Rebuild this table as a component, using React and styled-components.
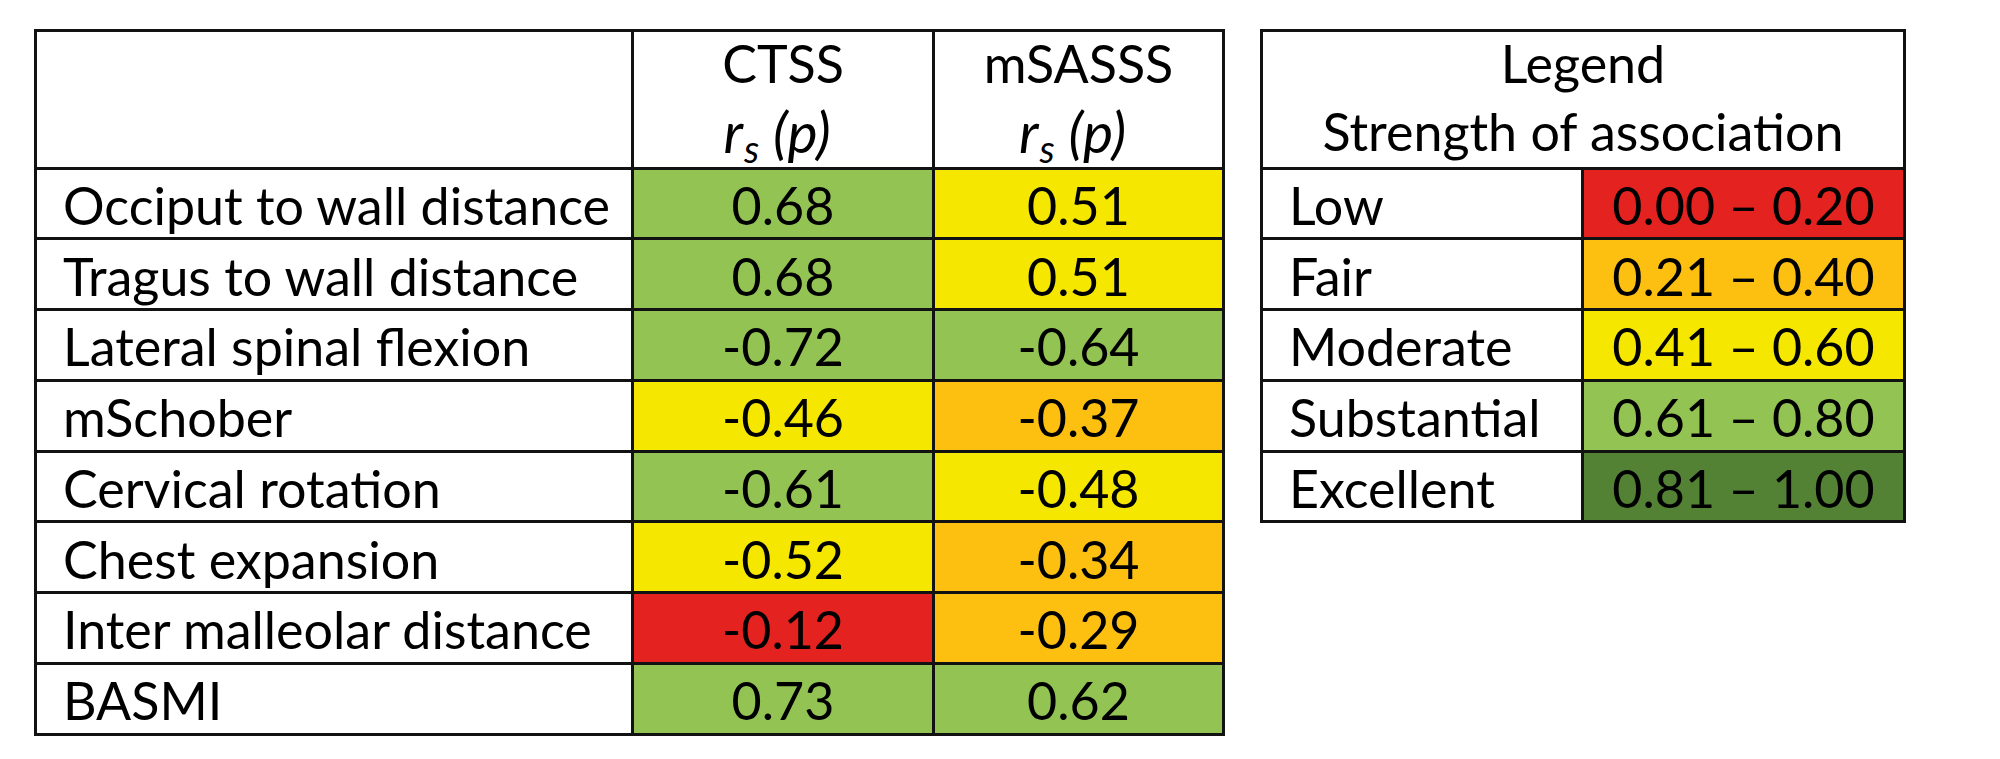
import React from 'react';
import styled, { createGlobalStyle } from 'styled-components';

const GlobalStyle = createGlobalStyle`
  html, body {
    margin: 0;
    padding: 0;
    background: #ffffff;
  }
  body {
    font-family: Lato, "Liberation Sans", sans-serif;
    color: #000000;
  }
`;

const COLORS = {
  red: '#e42320',
  orange: '#fdc010',
  yellow: '#f5e700',
  green: '#93c353',
  darkGreen: '#548235',
};

const Page = styled.div`
  display: flex;
  align-items: flex-start;
  gap: 35px;
  padding: 29px 0 0 34px;
`;

const Table = styled.table`
  border-collapse: collapse;
  table-layout: fixed;
  width: ${props => props.$width}px;
  font-size: 52px;
  line-height: 1;
  th,
  td {
    border: 3px solid #121212;
    padding: 0;
  }
`;

const HeadCell = styled.th`
  height: 137.5px;
  box-sizing: border-box;
  padding-top: 3px !important;
  font-weight: 400;
  text-align: center;
  vertical-align: top;
`;

const HeadLine = styled.div`
  height: 56px;
  line-height: 56px;
  white-space: nowrap;
  & + & {
    margin-top: 12px;
  }
`;

const Italic = styled.span`
  font-style: italic;
  font-size: 57px;
  margin-right: 12px;
`;

const Sub = styled.sub`
  font-size: 38px;
  vertical-align: -10px;
  line-height: 0;
  margin-left: 1px;
  margin-right: 14px;
`;

const Row = styled.tr`
  height: 70.75px;
`;

const LabelCell = styled.td`
  text-align: left;
  padding-left: 26px !important;
  padding-top: 3px !important;
  white-space: nowrap;
  background: #ffffff;
`;

const ValueCell = styled.td`
  text-align: center;
  padding-top: 3px !important;
  white-space: nowrap;
  background: ${props => COLORS[props.$tone]};
`;

const rows = [
  ['Occiput to wall distance', '0.68', 'green', '0.51', 'yellow'],
  ['Tragus to wall distance', '0.68', 'green', '0.51', 'yellow'],
  ['Lateral spinal flexion', '-0.72', 'green', '-0.64', 'green'],
  ['mSchober', '-0.46', 'yellow', '-0.37', 'orange'],
  ['Cervical rotation', '-0.61', 'green', '-0.48', 'yellow'],
  ['Chest expansion', '-0.52', 'yellow', '-0.34', 'orange'],
  ['Inter malleolar distance', '-0.12', 'red', '-0.29', 'orange'],
  ['BASMI', '0.73', 'green', '0.62', 'green'],
];

const legend = [
  ['Low', '0.00 – 0.20', 'red'],
  ['Fair', '0.21 – 0.40', 'orange'],
  ['Moderate', '0.41 – 0.60', 'yellow'],
  ['Substantial', '0.61 – 0.80', 'green'],
  ['Excellent', '0.81 – 1.00', 'darkGreen'],
];

// r_s (p) line under the column titles
function Stat() {
  return (
    <HeadLine>
      <Italic>
        r<Sub>s</Sub>(p)
      </Italic>
    </HeadLine>
  );
}

export default function App() {
  return (
    <>
      <GlobalStyle />
      <Page>
        <Table $width={1188}>
          <colgroup>
            <col style={{ width: 597 }} />
            <col style={{ width: 301 }} />
            <col style={{ width: 290 }} />
          </colgroup>
          <thead>
            <tr>
              <HeadCell />
              <HeadCell>
                <HeadLine>CTSS</HeadLine>
                <Stat />
              </HeadCell>
              <HeadCell>
                <HeadLine>mSASSS</HeadLine>
                <Stat />
              </HeadCell>
            </tr>
          </thead>
          <tbody>
            {rows.map(([label, a, toneA, b, toneB]) => (
              <Row key={label}>
                <LabelCell>{label}</LabelCell>
                <ValueCell $tone={toneA}>{a}</ValueCell>
                <ValueCell $tone={toneB}>{b}</ValueCell>
              </Row>
            ))}
          </tbody>
        </Table>

        <Table $width={643}>
          <colgroup>
            <col style={{ width: 321 }} />
            <col style={{ width: 322 }} />
          </colgroup>
          <thead>
            <tr>
              <HeadCell colSpan={2}>
                <HeadLine>Legend</HeadLine>
                <HeadLine>Strength of association</HeadLine>
              </HeadCell>
            </tr>
          </thead>
          <tbody>
            {legend.map(([label, range, tone]) => (
              <Row key={label}>
                <LabelCell>{label}</LabelCell>
                <ValueCell $tone={tone}>{range}</ValueCell>
              </Row>
            ))}
          </tbody>
        </Table>
      </Page>
    </>
  );
}
